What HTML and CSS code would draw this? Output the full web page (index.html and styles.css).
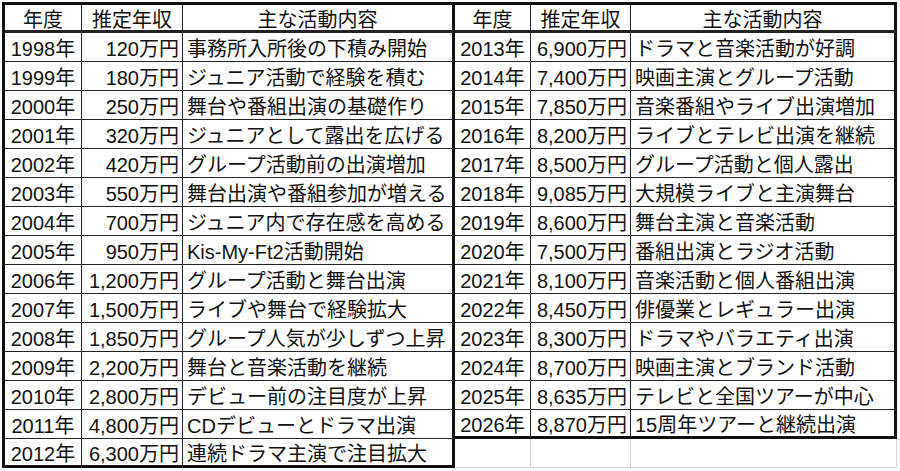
FILE: index.html
```html
<!DOCTYPE html>
<html lang="ja">
<head>
<meta charset="utf-8">
<link rel="stylesheet" href="styles.css">
</head>
<body>
<div class="sheet">
  <div class="c hd">年度</div><div class="c hd">推定年収</div><div class="c hd split">主な活動内容</div><div class="c hd">年度</div><div class="c hd">推定年収</div><div class="c hd edge">主な活動内容</div>

  <div class="c yr">1998年</div><div class="c num">120万円</div><div class="c txt split">事務所入所後の下積み開始</div><div class="c yr">2013年</div><div class="c num">6,900万円</div><div class="c txt edge">ドラマと音楽活動が好調</div>
  <div class="c yr">1999年</div><div class="c num">180万円</div><div class="c txt split">ジュニア活動で経験を積む</div><div class="c yr">2014年</div><div class="c num">7,400万円</div><div class="c txt edge">映画主演とグループ活動</div>
  <div class="c yr">2000年</div><div class="c num">250万円</div><div class="c txt split">舞台や番組出演の基礎作り</div><div class="c yr">2015年</div><div class="c num">7,850万円</div><div class="c txt edge">音楽番組やライブ出演増加</div>
  <div class="c yr">2001年</div><div class="c num">320万円</div><div class="c txt split">ジュニアとして露出を広げる</div><div class="c yr">2016年</div><div class="c num">8,200万円</div><div class="c txt edge">ライブとテレビ出演を継続</div>
  <div class="c yr">2002年</div><div class="c num">420万円</div><div class="c txt split">グループ活動前の出演増加</div><div class="c yr">2017年</div><div class="c num">8,500万円</div><div class="c txt edge">グループ活動と個人露出</div>
  <div class="c yr">2003年</div><div class="c num">550万円</div><div class="c txt split">舞台出演や番組参加が増える</div><div class="c yr">2018年</div><div class="c num">9,085万円</div><div class="c txt edge">大規模ライブと主演舞台</div>
  <div class="c yr">2004年</div><div class="c num">700万円</div><div class="c txt split">ジュニア内で存在感を高める</div><div class="c yr">2019年</div><div class="c num">8,600万円</div><div class="c txt edge">舞台主演と音楽活動</div>
  <div class="c yr">2005年</div><div class="c num">950万円</div><div class="c txt split">Kis-My-Ft2活動開始</div><div class="c yr">2020年</div><div class="c num">7,500万円</div><div class="c txt edge">番組出演とラジオ活動</div>
  <div class="c yr">2006年</div><div class="c num">1,200万円</div><div class="c txt split">グループ活動と舞台出演</div><div class="c yr">2021年</div><div class="c num">8,100万円</div><div class="c txt edge">音楽活動と個人番組出演</div>
  <div class="c yr">2007年</div><div class="c num">1,500万円</div><div class="c txt split">ライブや舞台で経験拡大</div><div class="c yr">2022年</div><div class="c num">8,450万円</div><div class="c txt edge">俳優業とレギュラー出演</div>
  <div class="c yr">2008年</div><div class="c num">1,850万円</div><div class="c txt split">グループ人気が少しずつ上昇</div><div class="c yr">2023年</div><div class="c num">8,300万円</div><div class="c txt edge">ドラマやバラエティ出演</div>
  <div class="c yr">2009年</div><div class="c num">2,200万円</div><div class="c txt split">舞台と音楽活動を継続</div><div class="c yr">2024年</div><div class="c num">8,700万円</div><div class="c txt edge">映画主演とブランド活動</div>
  <div class="c yr">2010年</div><div class="c num">2,800万円</div><div class="c txt split">デビュー前の注目度が上昇</div><div class="c yr">2025年</div><div class="c num">8,635万円</div><div class="c txt edge">テレビと全国ツアーが中心</div>
  <div class="c yr">2011年</div><div class="c num">4,800万円</div><div class="c txt split">CDデビューとドラマ出演</div><div class="c yr endr">2026年</div><div class="c num endr">8,870万円</div><div class="c txt edge endr">15周年ツアーと継続出演</div>
  <div class="c yr endl">2012年</div><div class="c num endl">6,300万円</div><div class="c txt split endl">連続ドラマ主演で注目拡大</div><div class="c empty"></div><div class="c empty"></div><div class="c empty"></div>
</div>
</body>
</html>
```
FILE: styles.css
```css
html, body {
  margin: 0;
  padding: 0;
  background: #fff;
}

body {
  padding: 2px 0 0 2px;
}

.sheet {
  display: grid;
  grid-template-columns: 77px 101px 272px 76px 100px 266px;
  grid-template-rows: 28px;
  grid-auto-rows: 29px;
  width: max-content;
  border-top: 3px solid #111;
  border-left: 3px solid #111;
  font-family: "Liberation Sans", "Noto Sans CJK JP", sans-serif;
  font-size: 20px;
  color: #111;
}

.c {
  box-sizing: border-box;
  display: flex;
  align-items: center;
  justify-content: center;
  border-right: 1px solid #222;
  border-bottom: 1px solid #222;
  white-space: nowrap;
  overflow: hidden;
  padding: 1px 3px 0 3px;
}

.hd {
  border-bottom: 3px solid #222;
  padding-top: 2px;
}

.num {
  justify-content: flex-end;
  padding-right: 3px;
}

.txt {
  justify-content: flex-start;
  padding-left: 4px;
}

.split,
.edge {
  border-right: 3px solid #111;
}

.endr,
.endl {
  border-bottom: 3px solid #111;
}

.empty {
  border-right: 1px solid #d6d6d6;
  border-bottom: 1px solid #d6d6d6;
}
```
